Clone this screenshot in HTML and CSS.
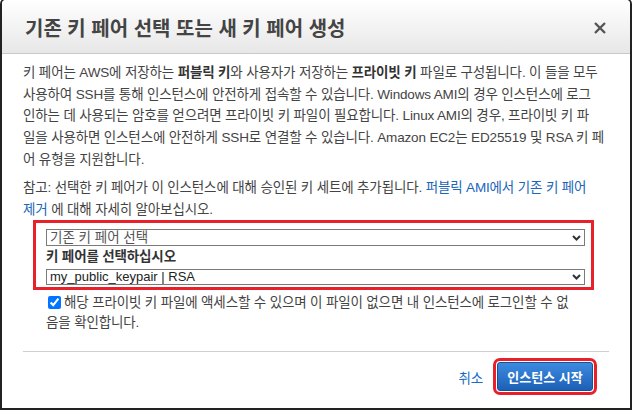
FILE: index.html
```html
<!DOCTYPE html>
<html lang="ko">
<head>
    <meta charset="UTF-8">
    <meta name="viewport" content="width=device-width, initial-scale=1.0">
    <title>키 페어 선택</title>
    <link rel="stylesheet" href="styles.css">
</head>
<body>
    <div class="modal">
        <div class="modal-header">
            <h1>기존 키 페어 선택 또는 새 키 페어 생성</h1>
            <button class="close-btn" aria-label="닫기">
                <svg width="12" height="12" viewBox="0 0 12 12">
                    <path d="M1 1L11 11M11 1L1 11" stroke="#555" stroke-width="2.4" fill="none"/>
                </svg>
            </button>
        </div>

        <div class="modal-body">
            <p class="intro">키 페어는 AWS에 저장하는 <b>퍼블릭 키</b>와 사용자가 저장하는 <b>프라이빗 키</b> 파일로 구성됩니다. 이 들을 모두<br>사용하여 SSH를 통해 인스턴스에 안전하게 접속할 수 있습니다. Windows AMI의 경우 인스턴스에 로그<br>인하는 데 사용되는 암호를 얻으려면 프라이빗 키 파일이 필요합니다. Linux AMI의 경우, 프라이빗 키 파<br>일을 사용하면 인스턴스에 안전하게 SSH로 연결할 수 있습니다. Amazon EC2는 ED25519 및 RSA 키 페<br>어 유형을 지원합니다.</p>

            <p class="note">참고: 선택한 키 페어가 이 인스턴스에 대해 승인된 키 세트에 추가됩니다. <a href="#">퍼블릭 AMI에서 기존 키 페어<br>제거</a> 에 대해 자세히 알아보십시오.</p>

            <!-- Key pair selection -->
            <div class="key-box">
                <div class="select-wrap first">
                    <select>
                        <option>기존 키 페어 선택</option>
                    </select>
                    <svg class="chevron" width="9" height="6" viewBox="0 0 9 6">
                        <path d="M1 1L4.5 4.5L8 1" stroke="#333" stroke-width="2" fill="none"/>
                    </svg>
                </div>
                <label class="key-label">키 페어를 선택하십시오</label>
                <div class="select-wrap second">
                    <select>
                        <option>my_public_keypair | RSA</option>
                    </select>
                    <svg class="chevron" width="9" height="6" viewBox="0 0 9 6">
                        <path d="M1 1L4.5 4.5L8 1" stroke="#333" stroke-width="2" fill="none"/>
                    </svg>
                </div>
            </div>

            <label class="ack">
                <input type="checkbox" checked>해당 프라이빗 키 파일에 액세스할 수 있으며 이 파일이 없으면 내 인스턴스에 로그인할 수 없<br>음을 확인합니다.
            </label>
        </div>

        <div class="modal-footer">
            <a href="#" class="cancel">취소</a>
            <button class="launch-btn">인스턴스 시작</button>
        </div>
    </div>
</body>
</html>
```

FILE: styles.css
```css
* {
    margin: 0;
    padding: 0;
    box-sizing: border-box;
}
body {
    font-family: 'Liberation Sans', 'Noto Sans CJK KR', sans-serif;
    background: #fff;
    color: #444;
    font-size: 13.5px;
    letter-spacing: -0.15px;
}
.modal {
    width: 632px;
    height: 412px;
    margin-top: -2px;
    border: 2px solid #222;
    border-radius: 6px 6px 0 0;
    background: #fff;
    overflow: hidden;
}
.modal-header {
    height: 54px;
    padding: 2px 24px 0 23px;
    display: flex;
    justify-content: space-between;
    align-items: center;
    background: linear-gradient(#ffffff, #e7e7e7);
    border-bottom: 1px solid #c9c9c9;
}
.modal-header h1 {
    font-size: 20px;
    font-weight: bold;
    color: #444;
    letter-spacing: 0;
}
.close-btn {
    background: none;
    border: none;
    width: 12px;
    height: 12px;
    display: flex;
    cursor: pointer;
}
.modal-body {
    padding: 8px 16px 0 21px;
}
.modal-body p {
    line-height: 21.7px;
    white-space: nowrap;
}
.intro b {
    color: #333;
}
.note {
    margin-top: 6.5px;
}
.note a {
    color: #1a66b8;
    text-decoration: none;
}
.key-box {
    margin: 0 20px 0 10px;
    border: 3px solid #e8202a;
    padding: 6px 6px 2px 10px;
}
.select-wrap {
    position: relative;
}
.select-wrap select {
    display: block;
    width: 100%;
    appearance: none;
    border: 1px solid #7a7a7a;
    border-radius: 0;
    background: #fff;
    font-family: inherit;
    letter-spacing: 0;
    padding: 0 16px 0 3px;
}
.first select {
    height: 17px;
    line-height: 15px;
    font-size: 13.5px;
    color: #555;
}
.second {
    margin-top: 2px;
}
.second select {
    height: 16px;
    line-height: 14px;
    font-size: 13px;
    color: #222;
}
.chevron {
    position: absolute;
    right: 4px;
    top: 50%;
    margin-top: -3px;
}
.key-label {
    display: block;
    font-weight: bold;
    color: #333;
    line-height: 21px;
}
.ack {
    display: block;
    margin: 3px 20px 0 23px;
    line-height: 20px;
    white-space: nowrap;
}
.ack input {
    width: 13px;
    height: 13px;
    margin: 0 3px 0 2px;
    vertical-align: -2px;
}
.modal-footer {
    margin: 18px 21px 0 21px;
    padding-top: 10px;
    border-top: 1px solid #cfcfcf;
    display: flex;
    justify-content: flex-end;
    align-items: center;
}
.cancel {
    color: #1a6bc6;
    text-decoration: none;
    margin-right: 14px;
}
.launch-btn {
    height: 29px;
    width: 96px;
    margin-right: 16px;
    border: 1px solid #1d4f8c;
    border-radius: 3px;
    background: linear-gradient(#3b8be0, #1d60b6);
    color: #fff;
    font-family: inherit;
    font-size: 13px;
    font-weight: bold;
    letter-spacing: 0;
    outline: 3px solid #e8202a;
    outline-offset: 1px;
    cursor: pointer;
}
```
